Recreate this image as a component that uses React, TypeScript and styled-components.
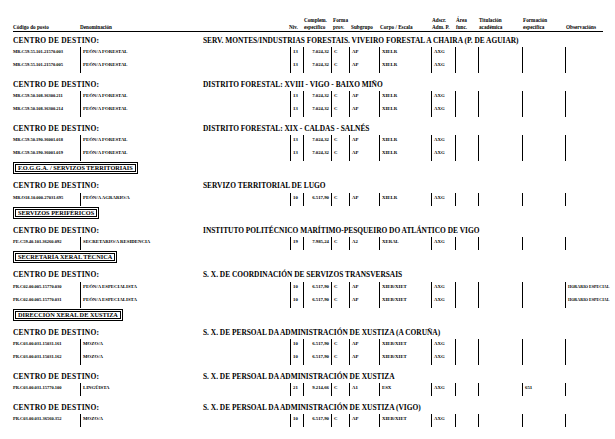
import React from 'react';
import styled, { createGlobalStyle } from 'styled-components';

const GlobalStyle = createGlobalStyle`
  body {
    margin: 0;
    background: #fff;
    color: #000;
    font-family: "Liberation Serif", "Times New Roman", serif;
  }
`;

// code, denominación, nivel, complemento, forma, subgrupo, corpo, adscr, área, titulación, formación, observacións
const COLS = '67px 210px 13px 28px 18px 30px 52px 24px 23px 44px 43px 38px';

const Page = styled.div`
  width: 590px;
  padding: 17px 12px 0 13px;
`;

const HeaderGrid = styled.div`
  display: grid;
  grid-template-columns: ${COLS};
  align-items: end;
  border-bottom: 1px solid #000;
  padding-bottom: 1px;
  margin-bottom: 1px;
  font-size: 5.2px;
  font-weight: bold;
  line-height: 6.5px;
  white-space: nowrap;
`;

const HeadCell = styled.div<{ $shift?: number }>`
  margin-left: ${p => p.$shift || 0}px;
`;

const Group = styled.div`
  & + & {
    margin-top: 4px;
  }
`;

const Centro = styled.div`
  display: flex;
  align-items: center;
  height: 14px;
  font-size: 7.4px;
  font-weight: bold;
  white-space: nowrap;
`;

const CentroLabel = styled.div`
  width: 190px;
  font-size: 7.5px;
  letter-spacing: 0.2px;
`;

const Row = styled.div`
  display: grid;
  grid-template-columns: ${COLS};
  height: 13px;
  font-size: 4.8px;
  font-weight: bold;
  line-height: 6px;
  white-space: nowrap;
`;

const Cell = styled.div<{ $bar?: boolean; $right?: boolean; $size?: number }>`
  border-left: ${p => (p.$bar ? '1px solid #000' : 'none')};
  padding: 2px 2px 0 ${p => (p.$bar ? 2 : 0)}px;
  text-align: ${p => (p.$right ? 'right' : 'left')};
  font-size: ${p => (p.$size ? `${p.$size}px` : 'inherit')};
`;

const SectionBox = styled.div`
  width: fit-content;
  margin: 1px 0 4.5px;
  border: 3px double #000;
  padding: 0 2px;
  height: 6px;
  line-height: 6px;
  font-size: 6.3px;
  font-weight: bold;
  white-space: nowrap;
`;

type Post = {
  code: string;
  name: string;
  niv: string;
  comp: string;
  grupo: string;
  corpo: string;
  formacion?: string;
  obs?: string;
};

type Item =
  | { kind: 'box'; title: string }
  | { kind: 'centro'; title: string; posts: Post[] };

const forestal = (code: string): Post => ({
  code,
  name: 'PEÓN/A FORESTAL',
  niv: '13',
  comp: '7.024,32',
  grupo: 'AP',
  corpo: 'XIELR',
});

const mozo = (code: string): Post => ({
  code,
  name: 'MOZO/A',
  niv: '10',
  comp: '6.517,90',
  grupo: 'AP',
  corpo: 'XIEB/XIET',
});

const especialista = (code: string): Post => ({
  code,
  name: 'PEÓN/A ESPECIALISTA',
  niv: '10',
  comp: '6.517,90',
  grupo: 'AP',
  corpo: 'XIEB/XIET',
  obs: 'HORARIO ESPECIAL',
});

const items: Item[] = [
  {
    kind: 'centro',
    title: 'SERV. MONTES/INDUSTRIAS FORESTAIS. VIVEIRO FORESTAL A CHAIRA (P. DE AGUIAR)',
    posts: [forestal('MR.C59.55.101.21570.003'), forestal('MR.C59.55.101.21570.005')],
  },
  {
    kind: 'centro',
    title: 'DISTRITO FORESTAL: XVIII - VIGO - BAIXO MIÑO',
    posts: [forestal('MR.C59.50.108.36300.211'), forestal('MR.C59.50.108.36300.214')],
  },
  {
    kind: 'centro',
    title: 'DISTRITO FORESTAL: XIX - CALDAS - SALNÉS',
    posts: [forestal('MR.C59.50.190.36001.018'), forestal('MR.C59.50.190.36001.019')],
  },
  { kind: 'box', title: 'F.O.G.G.A. / SERVIZOS TERRITORIAIS' },
  {
    kind: 'centro',
    title: 'SERVIZO TERRITORIAL DE LUGO',
    posts: [
      {
        code: 'MR.O18.10.000.27031.695',
        name: 'PEÓN/A AGRARIO/A',
        niv: '10',
        comp: '6.517,90',
        grupo: 'AP',
        corpo: 'XIELR',
      },
    ],
  },
  { kind: 'box', title: 'SERVIZOS PERIFÉRICOS' },
  {
    kind: 'centro',
    title: 'INSTITUTO POLITÉCNICO MARÍTIMO-PESQUEIRO DO ATLÁNTICO DE VIGO',
    posts: [
      {
        code: 'PE.C59.40.101.36260.092',
        name: 'SECRETARIO/A RESIDENCIA',
        niv: '19',
        comp: '7.985,24',
        grupo: 'A2',
        corpo: 'XERAL',
      },
    ],
  },
  { kind: 'box', title: 'SECRETARÍA XERAL TÉCNICA' },
  {
    kind: 'centro',
    title: 'S. X. DE COORDINACIÓN DE SERVIZOS TRANSVERSAIS',
    posts: [especialista('PR.C02.00.005.15770.030'), especialista('PR.C02.00.005.15770.031')],
  },
  { kind: 'box', title: 'DIRECCIÓN XERAL DE XUSTIZA' },
  {
    kind: 'centro',
    title: 'S. X. DE PERSOAL DA ADMINISTRACIÓN DE XUSTIZA (A CORUÑA)',
    posts: [mozo('PR.C03.00.031.15031.161'), mozo('PR.C03.00.031.15031.162')],
  },
  {
    kind: 'centro',
    title: 'S. X. DE PERSOAL DA ADMINISTRACIÓN DE XUSTIZA',
    posts: [
      {
        code: 'PR.C03.00.031.15770.100',
        name: 'LINGÜISTA',
        niv: '21',
        comp: '9.214,66',
        grupo: 'A1',
        corpo: 'ESX',
        formacion: '651',
      },
    ],
  },
  {
    kind: 'centro',
    title: 'S. X. DE PERSOAL DA ADMINISTRACIÓN DE XUSTIZA (VIGO)',
    posts: [mozo('PR.C03.00.031.36560.352')],
  },
];

const PostRow: React.FC<{ post: Post }> = ({ post }) => (
  <Row>
    <Cell $size={4.5}>{post.code}</Cell>
    <Cell $bar>{post.name}</Cell>
    <Cell $bar>{post.niv}</Cell>
    <Cell $bar $right>{post.comp}</Cell>
    <Cell $bar>C</Cell>
    <Cell $bar>{post.grupo}</Cell>
    <Cell $bar>{post.corpo}</Cell>
    <Cell $bar>AXG</Cell>
    <Cell $bar />
    <Cell $bar />
    <Cell $bar>{post.formacion}</Cell>
    <Cell $bar $size={4.1}>{post.obs}</Cell>
  </Row>
);

const App: React.FC = () => {
  return (
    <>
      <GlobalStyle />
      <Page>
        <HeaderGrid>
          <HeadCell>Código do posto</HeadCell>
          <HeadCell>Denominación</HeadCell>
          <HeadCell $shift={-1}>Niv.</HeadCell>
          <HeadCell $shift={1}>Complem.<br />específico</HeadCell>
          <HeadCell $shift={2}>Forma<br />prov.</HeadCell>
          <HeadCell $shift={2}>Subgrupo</HeadCell>
          <HeadCell $shift={1}>Corpo / Escala</HeadCell>
          <HeadCell $shift={1}>Adscr.<br />Adm. P.</HeadCell>
          <HeadCell $shift={1}>Área<br />func.</HeadCell>
          <HeadCell $shift={1}>Titulación<br />académica</HeadCell>
          <HeadCell $shift={1}>Formación<br />específica</HeadCell>
          <HeadCell $shift={1}>Observacións</HeadCell>
        </HeaderGrid>
        {items.map((item, i) =>
          item.kind === 'box' ? (
            <SectionBox key={i}>{item.title}</SectionBox>
          ) : (
            <Group key={i}>
              <Centro>
                <CentroLabel>CENTRO DE DESTINO:</CentroLabel>
                <div>{item.title}</div>
              </Centro>
              {item.posts.map(p => (
                <PostRow key={p.code} post={p} />
              ))}
            </Group>
          )
        )}
      </Page>
    </>
  );
};

export default App;
